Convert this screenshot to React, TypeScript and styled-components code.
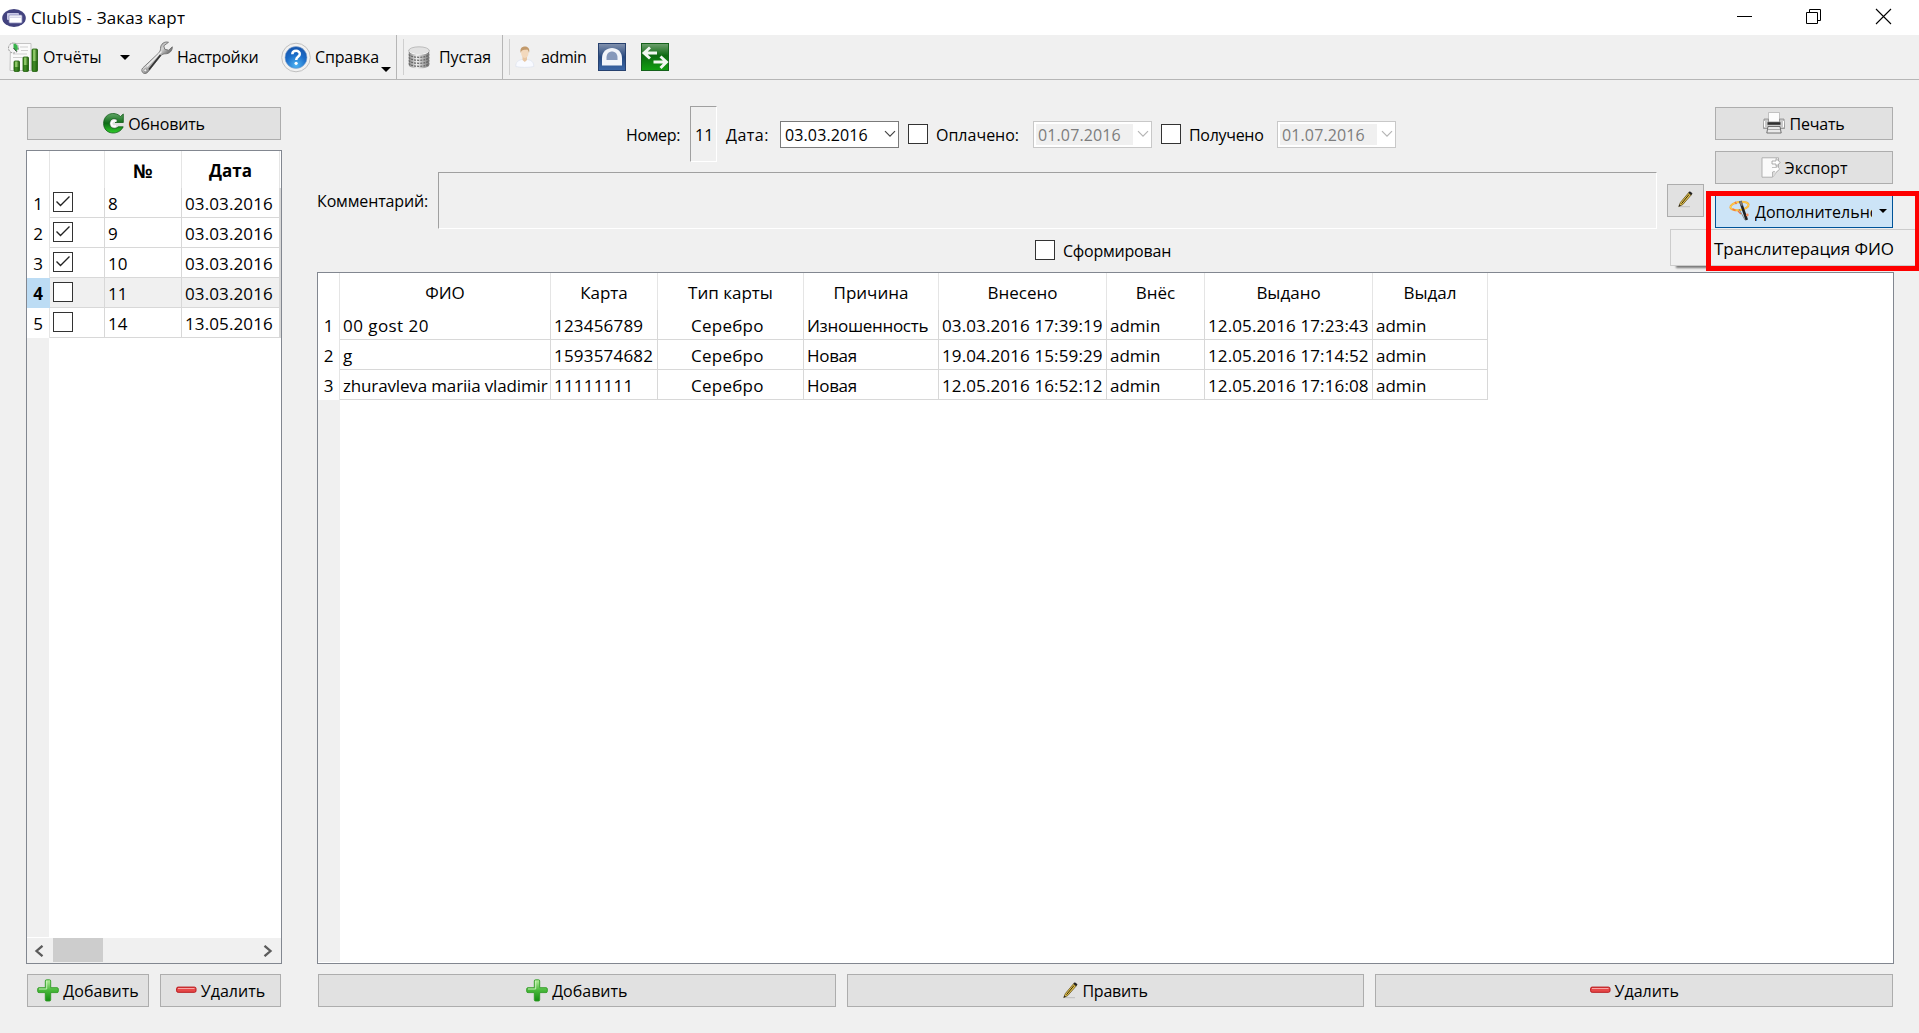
import React from 'react';
import styled, { createGlobalStyle, css } from 'styled-components';

const GlobalStyle = createGlobalStyle`
  * { box-sizing: border-box; }
  body {
    margin: 0;
    overflow: hidden;
    background: #f0f0f0;
    font-family: 'Open Sans', 'Noto Sans', sans-serif;
    color: #000;
  }
  svg { display: block; flex: none; }
`;

/* ---------- window chrome ---------- */

const Window = styled.div`
  position: relative;
  display: flex;
  flex-direction: column;
  width: 1919px;
  height: 1033px;
  overflow: hidden;
  background: #f0f0f0;
`;

const TitleBar = styled.header`
  display: flex;
  align-items: center;
  height: 35px;
  padding: 0 10px 0 2px;
  background: #fff;
`;

const Title = styled.h1`
  flex: 1;
  margin: 0 0 0 5px;
  font-size: 17px;
  font-weight: 400;
  line-height: 34px;
  letter-spacing: 0.16px;
`;

const WindowButtons = styled.div`
  display: flex;
  gap: 53px;
  padding: 0 17px 2px 0;

  > svg:first-child {
    margin-right: -1px;
  }
`;

const Toolbar = styled.nav`
  display: flex;
  height: 45px;
  border-bottom: 1px solid #b6b6b6;
`;

const ToolGroup = styled.div<{ $width?: number }>`
  display: flex;
  align-items: center;
  height: 44px;
  width: ${(p) => (p.$width ? `${p.$width}px` : 'auto')};
  ${(p) => p.$width && css`border-right: 1px solid #b6b6b6;`}
`;

const Tool = styled.button<{ $width: number; $gap?: number; $pad?: number }>`
  display: flex;
  align-items: center;
  gap: ${(p) => p.$gap ?? 4}px;
  width: ${(p) => p.$width}px;
  height: 44px;
  padding: 0 0 0 ${(p) => p.$pad ?? 0}px;
  border: 0;
  background: none;
  text-align: left;
`;

const Handle = styled.span`
  width: 1px;
  height: 36px;
  margin-left: 6px;
  background: #cfcfcf;
`;

const Text = styled.span<{ $track?: number; $width?: number }>`
  flex: none;
  width: ${(p) => (p.$width ? `${p.$width}px` : 'auto')};
  font: 400 16px/22px 'Open Sans', 'Noto Sans', sans-serif;
  letter-spacing: ${(p) => p.$track ?? 0}px;
  white-space: nowrap;
  color: #000;
`;

const Caret = styled.span<{ $size?: number; $corner?: boolean }>`
  flex: none;
  width: 0;
  height: 0;
  border: ${(p) => p.$size ?? 5}px solid transparent;
  border-top-color: #000;
  border-bottom-width: 0;
  ${(p) => p.$corner && css`align-self: flex-end; margin-bottom: 7px;`}
`;

/* ---------- shared controls ---------- */

const PushButton = styled.button<{ $width?: number; $primary?: boolean }>`
  display: flex;
  align-items: center;
  justify-content: center;
  gap: 4px;
  flex: ${(p) => (p.$width ? 'none' : '1')};
  width: ${(p) => (p.$width ? `${p.$width}px` : 'auto')};
  height: 33px;
  padding: 0 0 1px;
  border: 1px solid ${(p) => (p.$primary ? '#005499' : '#adadad')};
  background: ${(p) => (p.$primary ? '#cce4f7' : '#e1e1e1')};
  overflow: hidden;

  > ${Text} {
    padding-top: 2px;
  }
`;

const SplitButton = styled(PushButton)`
  flex: none;
  justify-content: flex-start;
  padding: 0 5px 1px 13px;
  gap: 5px;
`;

const ClippedText = styled(Text)`
  overflow: hidden;
  margin-right: 2px;
`;

const CheckBoxFrame = styled.span`
  display: grid;
  place-items: center;
  flex: none;
  width: 20px;
  height: 20px;
  border: 1px solid #333;
  background: #fff;
`;

const CheckBox = ({ checked = false }: { checked?: boolean }) => (
  <CheckBoxFrame>
    {checked && (
      <svg width="16" height="14" viewBox="0 0 16 14">
        <path d="M1.500 6.500L5.500 10.500L14.500 1.500" fill="none" stroke="#222" strokeWidth="1.4" />
      </svg>
    )}
  </CheckBoxFrame>
);

/* ---------- page layout ---------- */

const Page = styled.main`
  display: flex;
  gap: 35px;
  padding: 27px 24px 26px 26px;
  height: 953px;
`;

const SidePanel = styled.aside`
  display: flex;
  flex-direction: column;
  width: 256px;
`;

const ButtonRow = styled.div`
  display: flex;
  gap: 11px;
  padding: 0 1px;
`;

const TableFrame = styled.div<{ $top: number }>`
  display: flex;
  flex-direction: column;
  flex: 1;
  margin: ${(p) => p.$top}px 0 10px;
  border: 1px solid #828790;
  background: #fff;
  overflow: hidden;
`;

const Grid = styled.div<{ $cols: string }>`
  display: grid;
  grid-template-columns: ${(p) => p.$cols};
  width: max-content;
`;

const HeadCell = styled.div<{ $bold?: boolean; $size?: number }>`
  height: 37px;
  padding-top: 8px;
  border-right: 1px solid #e5e5e5;
  font-size: ${(p) => p.$size ?? 17}px;
  line-height: 24px;
  font-weight: ${(p) => (p.$bold ? 700 : 400)};
  text-align: center;
  white-space: nowrap;
`;

const RowHead = styled.div<{ $current?: boolean }>`
  height: 30px;
  padding-top: 1px;
  border-right: 1px solid ${(p) => (p.$current ? '#bcdcf4' : '#e5e5e5')};
  background: ${(p) => (p.$current ? '#bcdcf4' : '#fff')};
  font-size: 17px;
  line-height: 30px;
  font-weight: ${(p) => (p.$current ? 700 : 400)};
  text-align: center;
`;

const Cell = styled.div<{ $current?: boolean; $pad?: number; $track?: number }>`
  height: 30px;
  padding: 1px 0 0 ${(p) => p.$pad ?? 3}px;
  border-right: 1px solid #d8d8d8;
  border-bottom: 1px solid #d8d8d8;
  background: ${(p) => (p.$current ? '#f0f0f0' : '#fff')};
  font-size: 17px;
  line-height: 30px;
  letter-spacing: ${(p) => p.$track ?? 0}px;
  white-space: nowrap;
  overflow: hidden;
`;

const CheckCell = styled(Cell)`
  display: flex;
  align-items: center;
  padding: 0 0 1px 3px;
`;

const HeaderGutter = styled.div`
  flex: 1;
  width: 22px;
  background: #f0f0f0;
  border-bottom: 1px solid #fff;
`;

const ScrollBar = styled.div`
  display: flex;
  align-items: center;
  height: 25px;
  padding: 0 8px 0 7px;
  background: #f0f0f0;
`;

const ScrollThumb = styled.div`
  width: 50px;
  height: 24px;
  margin: 0 auto 1px 9px;
  background: #cdcdcd;
`;

const OrderPanel = styled.section`
  display: flex;
  flex-direction: column;
  width: 1577px;
`;

const OrderHeader = styled.div`
  display: flex;
  justify-content: space-between;
  height: 165px;
  padding-right: 1px;
`;

const Actions = styled.div`
  display: flex;
  flex-direction: column;
  gap: 11px;
  width: 178px;

  > button {
    flex: none;
    width: 178px;
  }
`;

const Form = styled.div`
  display: flex;
  flex-direction: column;
  gap: 10px;
  width: 1388px;
  margin-top: -1px;
`;

const FieldRow = styled.div<{ $height: number; $indent?: number }>`
  display: flex;
  align-items: center;
  height: ${(p) => p.$height}px;
  padding-left: ${(p) => p.$indent ?? 0}px;

  ${Text} {
    padding-top: 2px;
  }
`;

const CommentRow = styled(FieldRow)`
  ${Text} {
    padding-top: 1px;
  }
`;

const Sunken = styled.div<{ $width: number; $height: number }>`
  display: flex;
  align-items: center;
  width: ${(p) => p.$width}px;
  height: ${(p) => p.$height}px;
  padding-left: 4px;
  border: 1px solid;
  border-color: #a0a0a0 #fff #fff #a0a0a0;
`;

const Field = styled.label`
  display: flex;
  align-items: center;
  gap: 8px;
  margin-left: 9px;
`;

const DateBox = styled.div<{ $disabled?: boolean }>`
  display: flex;
  align-items: center;
  flex: none;
  gap: 4px;
  width: 119px;
  height: 27px;
  padding: 2px;
  border: 1px solid ${(p) => (p.$disabled ? '#c8c8c8' : '#7a7a7a')};
  background: #fff;

  > span${Text} {
    width: 97px;
    height: 21px;
    line-height: 21px;
    padding: 1px 0 0 2px;
    background: ${(p) => (p.$disabled ? '#f0f0f0' : '#fff')};
    color: ${(p) => (p.$disabled ? '#7d7d7d' : '#000')};
  }
`;

const EditButton = styled(PushButton)`
  margin: 0 0 1px 10px;
`;

/* ---------- overlays ---------- */

const DropMenu = styled.div`
  position: absolute;
  left: 1670px;
  top: 229px;
  display: flex;
  align-items: center;
  width: 260px;
  height: 37px;
  padding: 2px 0 0 43px;
  border: 1px solid #ccc;
  background: #f0f0f0;
  box-shadow: 5px 3px 2px -1px rgba(0, 0, 0, 0.5);
  font-size: 17px;
  letter-spacing: -0.06px;
`;

const Highlight = styled.div`
  position: absolute;
  left: 1706px;
  top: 191px;
  width: 213px;
  height: 80px;
  border: 5px solid #fe0000;
  border-right-width: 4px;
`;

/* ---------- icons ---------- */

const AppIcon = () => (
  <svg width="24" height="20" viewBox="0 0 24 20">
    <ellipse cx="12" cy="10" rx="11.8" ry="9" fill="#43437f" />
    <rect x="5" y="5" width="12" height="7" rx="1" fill="#c9c9e6" />
    <rect x="7" y="7" width="13" height="8" rx="1" fill="#fff" stroke="#8c8cba" strokeWidth=".8" />
    <path d="M8 9.2h11" stroke="#b9b9d8" strokeWidth=".8" />
  </svg>
);

const ReportsIcon = () => (
  <svg width="30" height="31" viewBox="0 0 30 31">
    <defs>
      <linearGradient id="bar" x1="0" x2="1">
        <stop offset="0" stopColor="#1e6b06" />
        <stop offset=".35" stopColor="#a5de7c" />
        <stop offset="1" stopColor="#175304" />
      </linearGradient>
    </defs>
    <path d="M2.500 1.500H23v27H2z" fill="#fafafa" stroke="#c4c4c4" />
    <path d="M12 5h8M13 8.500h7M5 12h14M5 15.500h10M5 26h7" stroke="#cfcfcf" />
    <circle cx="5.500" cy="6" r="5" fill="#f4f4f4" stroke="#8a8a8a" strokeWidth=".9" strokeDasharray="2 1" />
    <path d="M5.500 6V1.500A4.500 4.500 0 0 1 8.500 9.300z" fill="#37b34a" />
    <path d="M5.500 6l3 3.500" stroke="#333" />
    <rect x="6" y="19" width="5.500" height="10.500" rx="1" fill="url(#bar)" stroke="#195a06" strokeWidth=".8" />
    <rect x="15" y="15" width="5.500" height="14.500" rx="1" fill="url(#bar)" stroke="#195a06" strokeWidth=".8" />
    <rect x="24" y="7" width="5.500" height="22.500" rx="1" fill="url(#bar)" stroke="#195a06" strokeWidth=".8" />
    <path d="M24.500 19h4.500v10h-4.500zM15.500 23h4.500v6h-4.500zM6.500 25H11v4H6.500z" fill="#1d6a08" opacity=".7" />
  </svg>
);

const WrenchIcon = () => (
  <svg width="32" height="33" viewBox="0 0 32 33">
    <defs>
      <linearGradient id="steel" x1="0" y1="0" x2="1" y2="1">
        <stop offset="0" stopColor="#4b4b4b" />
        <stop offset=".45" stopColor="#d4d4d4" />
        <stop offset=".6" stopColor="#7a7a7a" />
        <stop offset="1" stopColor="#333" />
      </linearGradient>
    </defs>
    <path
      d="M27.500 1.300C23.500 0 19.500 3 19.500 7.500c0 2-.6 3.200-2 4.700L1.700 27c-1.600 1.700-1 4.300.9 5.200 1.800.8 3.600 0 4.700-1.600L19.800 14.800c1.200-1.500 2.700-2 4.700-2 4 0 7-3 6.800-7l-3.600 3.400-4-1-.9-3.400z"
      fill="url(#steel)"
      stroke="#666"
      strokeWidth=".8"
    />
    <path d="M20.500 10.500L6 25.500" stroke="#efefef" strokeWidth="1.100" />
    <path d="M19.500 14L8 28.500" stroke="#333" strokeWidth="1.600" />
    <circle cx="4.300" cy="29.300" r="1.500" fill="#eee" stroke="#777" strokeWidth=".6" />
  </svg>
);

const HelpIcon = () => (
  <svg width="30" height="31" viewBox="0 0 30 31">
    <defs>
      <radialGradient id="help" cx=".5" cy=".85" r=".8">
        <stop offset="0" stopColor="#4fb4f2" />
        <stop offset=".6" stopColor="#1b6cc8" />
        <stop offset="1" stopColor="#1757ae" />
      </radialGradient>
    </defs>
    <circle cx="15" cy="15.500" r="14.300" fill="#f1f1f1" stroke="#c0c0c0" />
    <circle cx="15" cy="15.500" r="11" fill="url(#help)" stroke="#8ca9cf" strokeWidth=".6" />
    <path d="M11.300 12.300c.2-4.600 7.600-4.500 7.500-.2 0 2.700-3.600 2.800-3.600 5.800" fill="none" stroke="#fff" strokeWidth="2.500" />
    <circle cx="15.100" cy="21.300" r="1.600" fill="#fff" />
  </svg>
);

const DatabaseIcon = () => (
  <svg width="22" height="23" viewBox="0 0 22 23">
    <defs>
      <linearGradient id="disk" x1="0" x2="1">
        <stop offset="0" stopColor="#858585" />
        <stop offset=".4" stopColor="#f0f0f0" />
        <stop offset="1" stopColor="#777" />
      </linearGradient>
    </defs>
    <path d="M.8 4v15c0 4.500 20.400 4.500 20.400 0V4z" fill="url(#disk)" />
    <g fill="none" stroke="#666" strokeWidth="1.200" strokeDasharray="2 1">
      <path d="M.8 8.500c2 3.700 18.400 3.700 20.400 0M.8 11.500c2 3.700 18.400 3.700 20.400 0M.8 14.500c2 3.700 18.400 3.700 20.400 0M.8 17.500c2 3.700 18.400 3.700 20.400 0" />
    </g>
    <ellipse cx="11" cy="4.500" rx="10.200" ry="3.700" fill="#e2e2e2" stroke="#a9a9a9" strokeWidth=".7" />
    <path d="M1.500 5.500c2 3.600 17 3.600 19 0" stroke="#fff" fill="none" />
  </svg>
);

const UserIcon = () => (
  <svg width="20" height="22" viewBox="0 0 20 22">
    <path d="M.8 20.500c0-5 3-6.500 6.500-7h5c3.500.5 6.500 2 6.500 7-5 1.200-13 1.200-18 0z" fill="#f8faff" stroke="#dde2ee" strokeWidth=".7" />
    <path d="M7.500 10h4.500v4l-2.200 2-2.300-2z" fill="#e8c6a2" />
    <ellipse cx="9.800" cy="7" rx="3.700" ry="5" fill="#f3d9bd" />
    <path d="M5.800 7C4.500 2.500 7 .5 10 .5s5.200 2.200 4 6.500c-.5-2-.8-3-2-3.500-2 .6-5.500-.6-6.200 3.500z" fill="#c29a6c" />
  </svg>
);

const ClubIcon = () => (
  <svg width="28" height="28" viewBox="0 0 28 28">
    <defs>
      <linearGradient id="club" x1="0" y1="0" x2="0" y2="1">
        <stop offset="0" stopColor="#8493ae" />
        <stop offset=".5" stopColor="#27497f" />
        <stop offset="1" stopColor="#3c68a8" />
      </linearGradient>
    </defs>
    <rect x=".5" y=".5" width="27" height="27" fill="url(#club)" stroke="#27416f" />
    <path d="M4 22.500V15C4 1.500 24 1.500 24 15v7.500z" fill="#f2f5fa" />
    <path d="M8.500 17v-2.500c0-8 11-8 11 0V17z" fill="#8699bb" />
  </svg>
);

const SwapIcon = () => (
  <svg width="28" height="28" viewBox="0 0 28 28">
    <defs>
      <linearGradient id="swap" x1="0" y1="0" x2="0" y2="1">
        <stop offset="0" stopColor="#6fa06f" />
        <stop offset=".45" stopColor="#0c6a10" />
        <stop offset="1" stopColor="#12a012" />
      </linearGradient>
    </defs>
    <rect x=".5" y=".5" width="27" height="27" fill="url(#swap)" stroke="#14611a" />
    <path d="M9 4.500L3 10l6 5.500M3.500 10H16M19.500 13.500l6 5.500-6 6M25 19H12.500" fill="none" stroke="#f1f7f1" strokeWidth="2.900" />
  </svg>
);

const RefreshIcon = () => (
  <svg width="21" height="21" viewBox="0 0 21 21">
    <defs>
      <linearGradient id="refresh" x1="0" y1="0" x2="0" y2="1">
        <stop offset="0" stopColor="#5fa565" />
        <stop offset=".5" stopColor="#0e6b17" />
        <stop offset="1" stopColor="#2fce2a" />
      </linearGradient>
    </defs>
    <path
      d="M20.300 1v8.500H12l2.600-2.500C11 4 6.600 6.300 6.600 10.500c0 4.600 5.200 6.500 8.700 3.300h4.900C16 23 .6 22 .6 10.500.6.500 11.500-2.300 17.500 3.500z"
      fill="url(#refresh)"
      stroke="#0f5a16"
      strokeWidth=".8"
    />
    <path d="M13.500 8.400c-3-1.600-5 .2-5 2.200 0 2.300 2.300 3.500 4.500 2.200" fill="none" stroke="#fff" strokeWidth="1.700" />
  </svg>
);

const PrinterIcon = () => (
  <svg width="22" height="22" viewBox="0 0 22 22">
    <path d="M5.500.5h11v10h-11z" fill="#fcfcfc" stroke="#b5b5b5" strokeWidth=".8" />
    <path d="M1 7h4.500v3h11V7H21l.7 9.500H.5z" fill="#c9c9c9" stroke="#8c8c8c" strokeWidth=".8" />
    <path d="M4.500 11.500h13" stroke="#303030" strokeWidth="2.600" />
    <path d="M1.500 9v6M20.500 9v6" stroke="#fff" strokeWidth="1" />
    <path d="M5 14.500h12l1.200 6.500H3.800z" fill="#e9e9e9" stroke="#555" strokeWidth=".8" />
    <path d="M5 17.500h12" stroke="#aaa" />
  </svg>
);

const ExportIcon = () => (
  <svg width="20" height="21" viewBox="0 0 20 21">
    <path d="M1 .8h16.500V13L11.500 20.200H1z" fill="#fafafa" stroke="#aaa" strokeWidth=".9" />
    <path d="M11.500 20v-5l6-2" fill="#ddd" stroke="#aaa" strokeWidth=".8" />
    <path d="M11 4h4V1.500l4.300 4-4.300 4V7h-4z" fill="#fff" stroke="#999" strokeWidth=".8" />
    <path d="M11 10.500h4.500V8.800l3.300 3.200-4 3.500" fill="#fff" stroke="#b3b3b3" strokeWidth=".8" />
  </svg>
);

const WandIcon = () => (
  <svg width="21" height="22" viewBox="0 0 21 22">
    <ellipse cx="10.500" cy="6" rx="9.200" ry="4" transform="rotate(-8 10.500 6)" fill="none" stroke="#f8a93c" strokeWidth="2" />
    <ellipse cx="10.500" cy="6" rx="9.200" ry="4" transform="rotate(-8 10.500 6)" fill="none" stroke="#ffe04a" strokeWidth=".8" />
    <path d="M10 1.500L12.500.8 19 19.500l-2.500 1z" fill="#222" />
    <path d="M10 1.500L12.500.8l1.600 4.500-2.200.8z" fill="#777" />
    <path d="M6 2l1.500 2M3.500 9l3 1.500M9 11l3 3" stroke="#f07846" strokeWidth="1.400" />
    <circle cx="18.300" cy="15" r="1.400" fill="#f79062" />
    <path d="M10 9l6 11" stroke="#777" strokeWidth=".8" />
  </svg>
);

const PencilIcon = () => (
  <svg width="15" height="17" viewBox="0 0 15 17">
    <path d="M2 15.700h10" stroke="#bdbdbd" />
    <path d="M.8 15.500l1.600-4L10.800 1.500l2.700 2.100-8.800 10z" fill="#e9c64a" stroke="#5e4e1c" strokeWidth=".8" />
    <path d="M3.500 12.700L11 3.500" stroke="#2e260e" strokeWidth="1" />
    <path d="M10.300 1.800L11.800.3l2.700 2-1.400 1.900z" fill="#222" />
    <path d="M.6 15.700l.8-2.200 1.500 1z" fill="#222" />
  </svg>
);

const PlusIcon = () => (
  <svg width="22" height="23" viewBox="0 0 22 23">
    <defs>
      <linearGradient id="plus" x1="0" y1="0" x2="0" y2="1">
        <stop offset="0" stopColor="#b5ee9c" />
        <stop offset=".5" stopColor="#48b83a" />
        <stop offset="1" stopColor="#128c10" />
      </linearGradient>
    </defs>
    <path
      d="M9.500.8h3Q13.700.8 13.700 2v6.700H20q1.300 0 1.300 1.200v2.500q0 1.200-1.300 1.200h-6.300v7.200q0 1.200-1.200 1.200h-3q-1.200 0-1.200-1.200v-7.200H2Q.7 13.600.7 12.400V9.900Q.7 8.700 2 8.700h6.300V2Q8.300.8 9.500.8z"
      fill="url(#plus)"
      stroke="#2f9c25"
      strokeWidth=".9"
    />
    <path d="M9.700 2v8H2" fill="none" stroke="#d9f8cc" strokeWidth=".8" />
  </svg>
);

const MinusIcon = () => (
  <svg width="21" height="8" viewBox="0 0 21 8">
    <rect x=".6" y="1.100" width="19.400" height="5.200" rx="1.500" fill="#e64848" stroke="#b81a1e" />
    <path d="M2 2.500h16.500" stroke="#f9b0b0" strokeWidth=".9" />
  </svg>
);

const ScrollArrow = ({ right = false }: { right?: boolean }) => (
  <svg width="10" height="12" viewBox="0 0 10 12">
    <path d={right ? 'M1.500 .8L7.500 6l-6 5.200' : 'M8.500 .8L2.500 6l6 5.200'} fill="none" stroke="#5c5c5c" strokeWidth="2.300" />
  </svg>
);

const Chevron = ({ color }: { color: string }) => (
  <svg width="12" height="8" viewBox="0 0 12 8">
    <path d="M1 1.200l5 5 5-5" fill="none" stroke={color} strokeWidth="1.200" />
  </svg>
);

/* ---------- data ---------- */

const orders = [
  { id: '8', date: '03.03.2016', done: true },
  { id: '9', date: '03.03.2016', done: true },
  { id: '10', date: '03.03.2016', done: true },
  { id: '11', date: '03.03.2016', done: false },
  { id: '14', date: '13.05.2016', done: false },
];
const currentOrder = '11';

const cardColumns = [
  { head: 'ФИО', pad: 3, track: -0.15 },
  { head: 'Карта', pad: 3, track: 0.2 },
  { head: 'Тип карты', pad: 33, track: 0.25 },
  { head: 'Причина', pad: 3, track: -0.3 },
  { head: 'Внесено', pad: 3, track: 0.12 },
  { head: 'Внёс', pad: 3, track: 0 },
  { head: 'Выдано', pad: 3, track: 0.12 },
  { head: 'Выдал', pad: 3, track: 0 },
];
const cards = [
  ['00 gost 20', '123456789', 'Серебро', 'Изношенность', '03.03.2016 17:39:19', 'admin', '12.05.2016 17:23:43', 'admin'],
  ['g', '1593574682', 'Серебро', 'Новая', '19.04.2016 15:59:29', 'admin', '12.05.2016 17:14:52', 'admin'],
  ['zhuravleva mariia vladimir', '11111111', 'Серебро', 'Новая', '12.05.2016 16:52:12', 'admin', '12.05.2016 17:16:08', 'admin'],
];

/* ---------- sections ---------- */

const DateField = ({ value, disabled }: { value: string; disabled?: boolean }) => (
  <DateBox $disabled={disabled}>
    <Text $track={0.12}>{value}</Text>
    <Chevron color={disabled ? '#b5b5b5' : '#444'} />
  </DateBox>
);

const OrderList = () => (
  <SidePanel>
    <ButtonRow>
      <PushButton>
        <RefreshIcon />
        <Text $track={-0.2}>Обновить</Text>
      </PushButton>
    </ButtonRow>
    <TableFrame $top={10}>
      <Grid $cols="23px 55px 77px 98px 1px">
        <HeadCell />
        <HeadCell />
        <HeadCell $bold $size={19}>№</HeadCell>
        <HeadCell $bold>Дата</HeadCell>
        <div />
        {orders.map((o, i) => {
          const current = o.id === currentOrder;
          return (
            <React.Fragment key={o.id}>
              <RowHead $current={current}>{i + 1}</RowHead>
              <CheckCell $current={current}>
                <CheckBox checked={o.done} />
              </CheckCell>
              <Cell $current={current}>{o.id}</Cell>
              <Cell $current={current} $track={0.12}>{o.date}</Cell>
              <Cell $current={current} $pad={0} />
            </React.Fragment>
          );
        })}
      </Grid>
      <HeaderGutter />
      <ScrollBar>
        <ScrollArrow />
        <ScrollThumb />
        <ScrollArrow right />
      </ScrollBar>
    </TableFrame>
    <ButtonRow>
      <PushButton $width={122}>
        <PlusIcon />
        <Text>Добавить</Text>
      </PushButton>
      <PushButton $width={121}>
        <MinusIcon />
        <Text>Удалить</Text>
      </PushButton>
    </ButtonRow>
  </SidePanel>
);

const OrderForm = () => (
  <Form>
    <FieldRow $height={56} $indent={309}>
      <Text $width={64} $track={-0.35}>Номер:</Text>
      <Sunken $width={27} $height={56}>
        <Text>11</Text>
      </Sunken>
      <Field>
        <Text $width={46} $track={0.5}>Дата:</Text>
        <DateField value="03.03.2016" />
      </Field>
      <Field>
        <CheckBox />
        <Text $width={89}>Оплачено:</Text>
        <DateField value="01.07.2016" disabled />
      </Field>
      <Field>
        <CheckBox />
        <Text $width={80} $track={-0.3}>Получено</Text>
        <DateField value="01.07.2016" disabled />
      </Field>
    </FieldRow>
    <CommentRow $height={57}>
      <Text $width={121} $track={-0.13}>Комментарий:</Text>
      <Sunken $width={1219} $height={57} />
      <EditButton $width={37}>
        <PencilIcon />
      </EditButton>
    </CommentRow>
    <FieldRow $height={22} $indent={709}>
      <Field>
        <CheckBox />
        <Text $track={-0.22}>Сформирован</Text>
      </Field>
    </FieldRow>
  </Form>
);

const MainToolbar = () => (
  <Toolbar>
    <ToolGroup $width={397}>
      <Tool $width={132} $gap={5} $pad={8}>
        <ReportsIcon />
        <Text $width={72}>Отчёты</Text>
        <Caret />
      </Tool>
      <Tool $width={132} $pad={9}>
        <WrenchIcon />
        <Text $track={-0.28}>Настройки</Text>
      </Tool>
      <Tool $width={132} $pad={17}>
        <HelpIcon />
        <Text $width={62} $track={-0.15}>Справка</Text>
        <Caret $corner />
      </Tool>
    </ToolGroup>
    <ToolGroup $width={106}>
      <Handle />
      <Tool $width={96} $gap={9} $pad={4}>
        <DatabaseIcon />
        <Text $track={-0.1}>Пустая</Text>
      </Tool>
    </ToolGroup>
    <ToolGroup>
      <Handle />
      <Tool $width={88} $gap={6} $pad={5}>
        <UserIcon />
        <Text $track={-0.4}>admin</Text>
      </Tool>
      <Tool $width={43}>
        <ClubIcon />
      </Tool>
      <Tool $width={40}>
        <SwapIcon />
      </Tool>
    </ToolGroup>
  </Toolbar>
);

const CardTable = () => (
  <TableFrame $top={0}>
    <Grid $cols="22px 211px 107px 146px 135px 168px 98px 168px 115px">
      <HeadCell />
      {cardColumns.map((c) => (
        <HeadCell key={c.head}>{c.head}</HeadCell>
      ))}
      {cards.map((row, r) => (
        <React.Fragment key={row[0]}>
          <RowHead>{r + 1}</RowHead>
          {row.map((value, c) => (
            <Cell
              key={c}
              $pad={cardColumns[c].pad}
              $track={c === 0 && r === 0 ? 0.45 : cardColumns[c].track}
            >
              {value}
            </Cell>
          ))}
        </React.Fragment>
      ))}
    </Grid>
    <HeaderGutter />
  </TableFrame>
);

export default function App() {
  return (
    <>
      <GlobalStyle />
      <Window>
        <TitleBar>
          <AppIcon />
          <Title>ClubIS - Заказ карт</Title>
          <WindowButtons>
            <svg width="17" height="17" viewBox="0 0 17 17">
              <path d="M1 8.500h15" stroke="#000" />
            </svg>
            <svg width="17" height="17" viewBox="0 0 17 17">
              <path d="M1.500 4.500h11v11h-11zM4.500 4V1.500h11v11H13" fill="none" stroke="#000" />
            </svg>
            <svg width="17" height="17" viewBox="0 0 17 17">
              <path d="M1 1l15 15M16 1L1 16" stroke="#000" strokeWidth="1.100" />
            </svg>
          </WindowButtons>
        </TitleBar>

        <MainToolbar />

        <Page>
          <OrderList />
          <OrderPanel>
            <OrderHeader>
              <OrderForm />
              <Actions>
                <PushButton>
                  <PrinterIcon />
                  <Text $track={-0.2}>Печать</Text>
                </PushButton>
                <PushButton>
                  <ExportIcon />
                  <Text>Экспорт</Text>
                </PushButton>
                <SplitButton $primary>
                  <WandIcon />
                  <ClippedText $width={117}>Дополнительно</ClippedText>
                  <Caret $size={4} />
                </SplitButton>
              </Actions>
            </OrderHeader>
            <CardTable />
            <ButtonRow>
              <PushButton>
                <PlusIcon />
                <Text>Добавить</Text>
              </PushButton>
              <PushButton>
                <PencilIcon />
                <Text $track={-0.2}>Править</Text>
              </PushButton>
              <PushButton>
                <MinusIcon />
                <Text>Удалить</Text>
              </PushButton>
            </ButtonRow>
          </OrderPanel>
        </Page>

        <DropMenu>Транслитерация ФИО</DropMenu>
        <Highlight />
      </Window>
    </>
  );
}
